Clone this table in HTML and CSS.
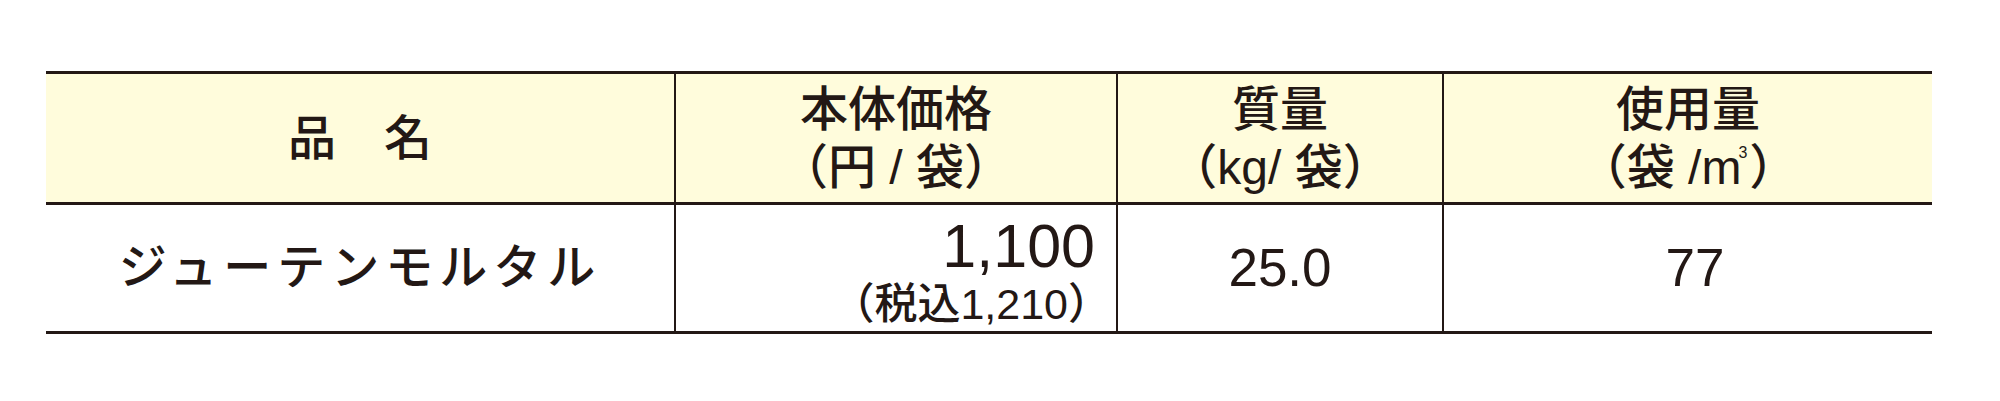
FILE: index.html
```html
<!DOCTYPE html>
<html lang="ja">
<head>
<meta charset="utf-8">
<link rel="stylesheet" href="styles.css">
</head>
<body>
<div class="price-table">
  <div class="row head">
    <div class="cell c1"><span class="single">品　名</span></div>
    <div class="cell c2"><span>本体価格</span><span>（円 / 袋）</span></div>
    <div class="cell c3"><span>質量</span><span>（kg/ 袋）</span></div>
    <div class="cell c4"><span>使用量</span><span>（袋 /m<span class="cube">3</span>）</span></div>
  </div>
  <div class="row body">
    <div class="cell c1"><span class="name">ジューテンモルタル</span></div>
    <div class="cell c2 price"><span class="main">1,100</span><span class="tax">（税込1,210）</span></div>
    <div class="cell c3"><span class="num">25.0</span></div>
    <div class="cell c4"><span class="num n77">77</span></div>
  </div>
</div>
</body>
</html>
```

FILE: styles.css
```css
html, body {
  margin: 0;
  padding: 0;
  background: #ffffff;
}
body {
  font-family: "Liberation Sans", "Noto Sans CJK JP", sans-serif;
  color: #231815;
}
.price-table {
  margin: 71px 0 0 46px;
  width: 1886px;
  border-top: 3px solid #231815;
  border-bottom: 3px solid #231815;
}
.row {
  display: grid;
  grid-template-columns: 628px 442px 326px 490px;
}
.row.head {
  background: #fffcdc;
  height: 128px;
  border-bottom: 3px solid #231815;
}
.row.body {
  height: 126px;
}
.cell {
  display: flex;
  flex-direction: column;
  align-items: center;
  justify-content: center;
  text-align: center;
}
.cell.c2, .cell.c3, .cell.c4 {
  border-left: 2px solid #231815;
}
.head .cell {
  font-size: 48px;
  line-height: 58px;
  padding-top: 2px;
  font-weight: 500;
}
.cube {
  font-size: 16px;
  display: inline-block;
  vertical-align: top;
  line-height: 16px;
  margin-top: 6px;
  margin-left: -3px;
  margin-right: 2px;
}
.name {
  font-size: 48px;
  font-weight: 500;
  letter-spacing: 6px;
  line-height: 58px;
}
.price {
  align-items: flex-end;
  justify-content: flex-start;
  padding: 12px 21px 0 0;
}
.price .main {
  font-size: 61px;
  line-height: 58px;
}
.price .tax {
  font-size: 43px;
  line-height: 50px;
  margin-top: 4px;
  margin-right: -16px;
  font-weight: 500;
}
.num {
  font-size: 53px;
  line-height: 60px;
}
.n77 {
  margin-left: 14px;
}
```
